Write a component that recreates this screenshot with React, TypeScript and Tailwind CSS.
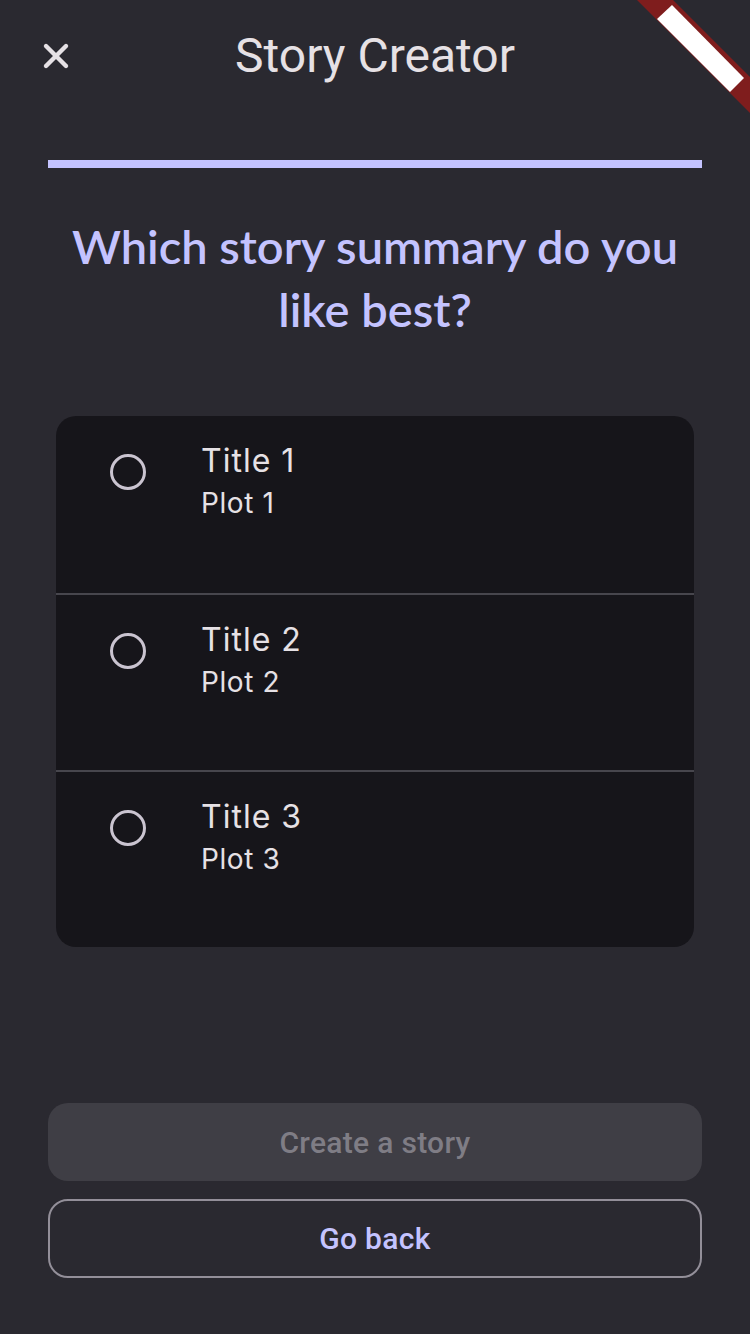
import { X } from "lucide-react"

const options = [
  { id: 1, title: "Title 1", plot: "Plot 1" },
  { id: 2, title: "Title 2", plot: "Plot 2" },
  { id: 3, title: "Title 3", plot: "Plot 3" },
]

const DebugBanner = () => (
  <svg
    className="absolute top-0 right-0"
    width="130"
    height="120"
    viewBox="0 0 130 120"
  >
    <polygon points="17,0 53,0 130,77 130,113" fill="#7f1d1d" />
    <polygon points="37,19 52,5 124,78 110,92" fill="#ffffff" />
  </svg>
)

export default function App() {
  return (
    <div className="relative w-[750px] h-[1334px] bg-[#2a2930] overflow-hidden flex flex-col font-['Roboto',sans-serif]">
      <DebugBanner />

      {/* Header */}
      <div className="h-[112px] flex items-center px-[28px]">
        <button className="w-[56px] h-[56px] flex items-center justify-center text-[#e6e1e5]">
          <X size={40} strokeWidth={2.6} />
        </button>
        <div className="flex-1 text-center text-[48px] text-[#e6e1e5] pr-[56px]">
          Story Creator
        </div>
      </div>

      {/* Progress */}
      <div className="mx-[48px] mt-[48px] h-[8px] bg-[#c4c3ff]" />

      {/* Question */}
      <h1 className="mt-[47px] px-[40px] text-center text-[47px] leading-[63px] font-semibold text-[#c4c3ff] font-['Lato',sans-serif]">
        Which story summary do you like best?
      </h1>

      {/* Options */}
      <div className="mx-[56px] mt-[75px] bg-[#16151a] rounded-[20px] overflow-hidden">
        {options.map((o, i) => (
          <div
            key={o.id}
            className={`h-[177px] flex pl-[54px] pt-[38px] ${i > 0 ? "border-t-2 border-[#47464d]" : ""}`}
          >
            <div className="w-[36px] h-[36px] rounded-full border-[3px] border-[#cac4d0]" />
            <div className="ml-[55px] -mt-[15px] font-['Inter',sans-serif] text-[#e6e1e5]">
              <div className="text-[32px] leading-[44px] tracking-[1px]">{o.title}</div>
              <div className="text-[28px] leading-[40px] tracking-[0.6px]">{o.plot}</div>
            </div>
          </div>
        ))}
      </div>

      <div className="flex-1" />

      {/* Buttons */}
      <div className="px-[48px] pb-[56px] flex flex-col gap-[18px]">
        <button className="h-[78px] rounded-[20px] bg-[#3f3e45] text-[#7f7d85] text-[30px] tracking-[0.3px] font-medium">
          Create a story
        </button>
        <button className="h-[79px] rounded-[20px] border-2 border-[#938f99] text-[#c4c3ff] text-[30px] tracking-[0.3px] font-medium">
          Go back
        </button>
      </div>
    </div>
  )
}
